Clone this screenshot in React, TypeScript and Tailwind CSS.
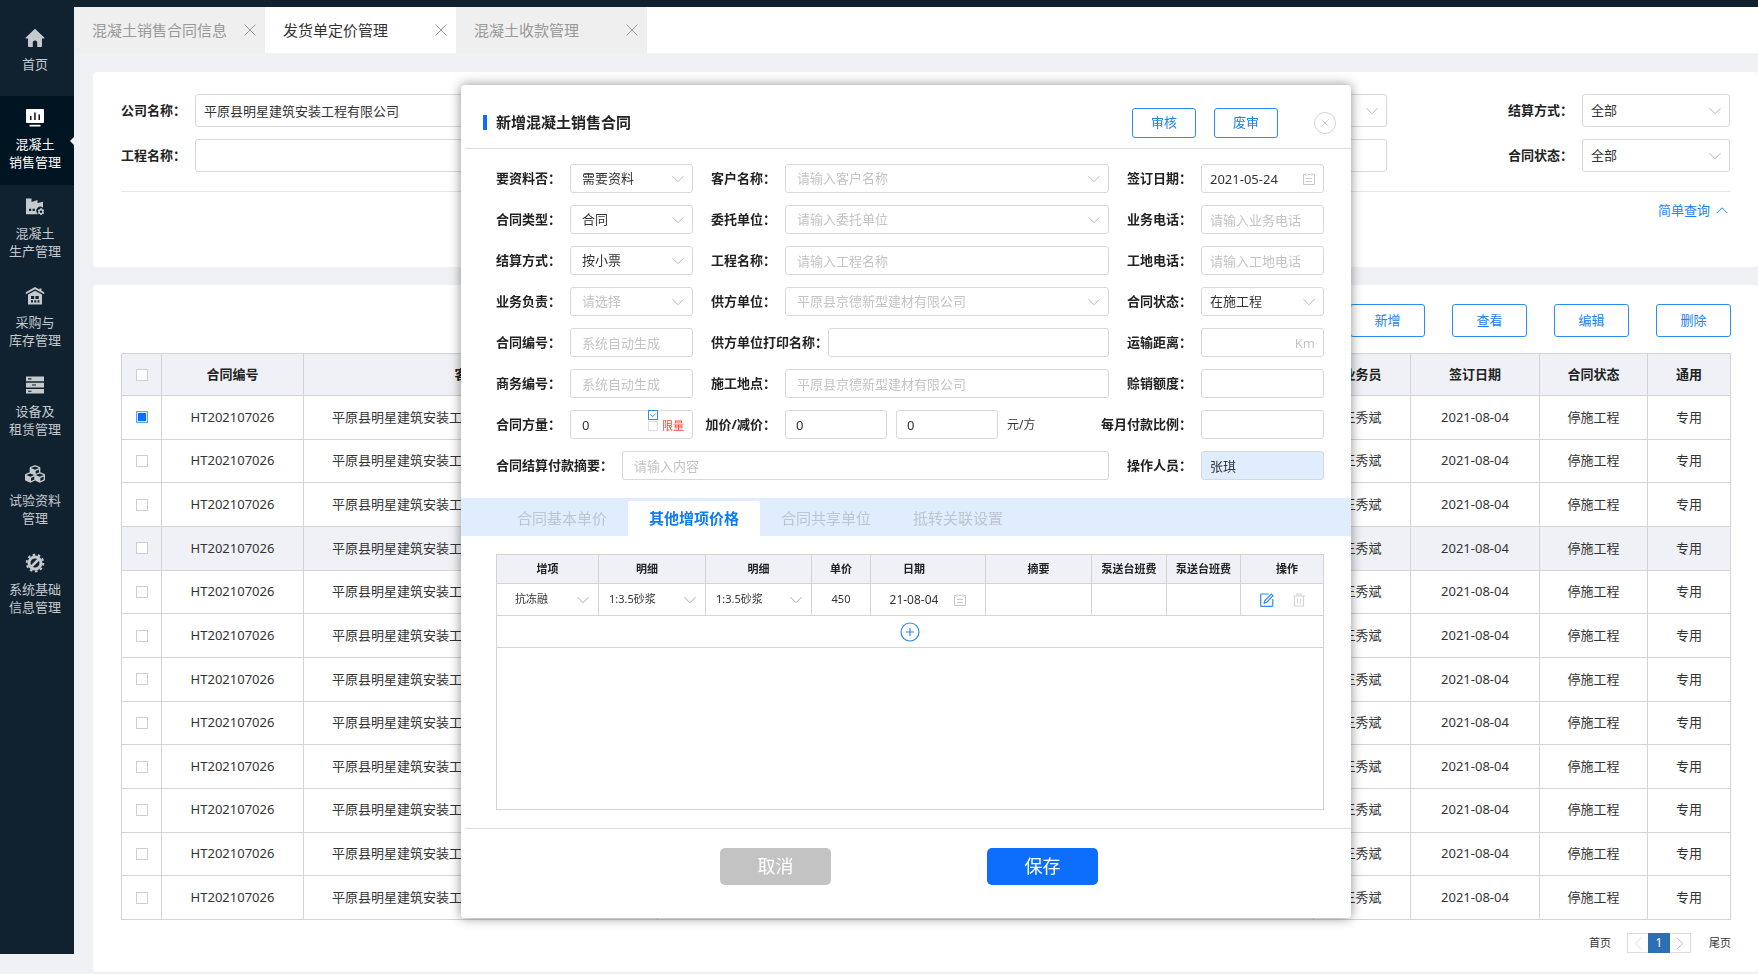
import { ReactNode } from 'react';
import clsx from 'clsx';
import { FaCubes } from 'react-icons/fa';

const HomeIcon = () => (
  <svg viewBox="0 0 20 20" className="h-[20px] w-[20px]" fill="currentColor">
    <path d="M10 0.8 0.8 9.6c-.5.5-.2 1 .4 1H3v7.6c0 .5.3.8.8.8h4v-4.4c0-1.3.9-2 2.2-2s2.2.7 2.2 2V19h4c.5 0 .8-.3.8-.8v-7.6h1.8c.6 0 .9-.5.4-1z" />
  </svg>
);

const SalesIcon = () => (
  <svg viewBox="0 0 20 20" className="h-[20px] w-[20px]" fill="currentColor">
    <path
      fillRule="evenodd"
      d="M2.2 1h15.6c.8 0 1.2.4 1.2 1.2v11.6c0 .8-.4 1.2-1.2 1.2H2.2C1.400 15 1 14.600 1 13.800V2.200C1 1.400 1.400 1 2.200 1zM5 8v4h1.500V8zM9.200 4.500V12h1.500V4.500zM13.500 6.500V12H15V6.500z"
    />
    <rect x="4.500" y="16.800" width="11" height="1.700" />
  </svg>
);

const FactoryIcon = () => (
  <svg viewBox="0 0 20 20" className="h-[20px] w-[20px]" fill="currentColor">
    <path
      fillRule="evenodd"
      d="M1 1.500h5.500V5l6-2v3l5.500-1.200v6a4 4 0 0 0-5.600 5.700l.5.700H1zM4 11.800v2.200h2.200v-2.200zM7.600 11.800v2.200h2.200v-2.200z"
    />
    <path
      fillRule="evenodd"
      d="m15.300 11.300 1.400 0 .5 1 1.200.1.700 1.200-.7 1.100.7 1.200-.8 1.100-1.200.1-.5 1h-1.300l-.6-1-1.100-.1-.7-1.100.6-1.200-.6-1.100.7-1.200 1.200-.1zM16 13.400a1.300 1.300 0 1 0 0 2.600 1.300 1.300 0 0 0 0-2.600z"
    />
  </svg>
);

const WarehouseIcon = () => (
  <svg viewBox="0 0 20 20" className="h-[20px] w-[20px]" fill="currentColor">
    <path d="M10 1 .8 6.200v2L10 3.200l9.200 5v-2L16.500 4.700V2.600h-2v1z" />
    <path
      fillRule="evenodd"
      d="M10 4.800 3 8.600V18.500h14V8.600zM6 10h3.200v3H6zM10.500 10h3.200v3h-3.200zM6 14.300h2v2.300H6zM9.300 14.300h2v2.300h-2zM12.600 14.300h1.800v2.300h-1.800z"
    />
  </svg>
);

const ServerIcon = () => (
  <svg viewBox="0 0 20 20" className="h-[20px] w-[20px]" fill="currentColor">
    <path
      fillRule="evenodd"
      d="M1 1.500h18v4.700H1zM3 3.300v1.100h3.500V3.300zM1 7.700h18v4.700H1zM7 9.500v1.100h4V9.500zM1 13.900h18v4.700H1zM3 15.700v1.100h3.500v-1.100z"
    />
  </svg>
);

const CubesIcon = () => <FaCubes className="h-[20px] w-[20px]" />;

const GearIcon = () => (
  <svg viewBox="0 0 20 20" className="h-[20px] w-[20px]" fill="none" stroke="currentColor">
    <circle cx="10" cy="10" r="8.300" strokeWidth="2" strokeDasharray="2.600 2.614" />
    <circle cx="10" cy="10" r="6" strokeWidth="3" />
    <path d="M6.500 13.500 13.500 6.500" strokeWidth="2.500" />
  </svg>
);

const Chevron = ({ className }: { className?: string }) => (
  <svg viewBox="0 0 12 7" className={clsx('pointer-events-none h-[7px] w-[12px]', className)} fill="none" stroke="currentColor">
    <path d="M0.500 0.700 6 6.200 11.500 0.700" />
  </svg>
);

const CalendarIcon = ({ className }: { className?: string }) => (
  <svg viewBox="0 0 12 12" className={clsx('pointer-events-none h-[12px] w-[12px]', className)} fill="none" stroke="currentColor">
    <path d="M2 1.500H0.500v10h11v-10H10M4.500 1.500h3M3 0v3M9 0v3M3 5.500h6M3 8.500h6" />
  </svg>
);

const CloseIcon = ({ className }: { className?: string }) => (
  <svg viewBox="0 0 12 12" className={className} fill="none" stroke="currentColor">
    <path d="M0.500 0.500 11.500 11.500M11.500 0.500 0.500 11.500" />
  </svg>
);

const MENU = [
  { icon: HomeIcon, lines: ['首页'] },
  { icon: SalesIcon, lines: ['混凝土', '销售管理'], active: true },
  { icon: FactoryIcon, lines: ['混凝土', '生产管理'] },
  { icon: WarehouseIcon, lines: ['采购与', '库存管理'] },
  { icon: ServerIcon, lines: ['设备及', '租赁管理'] },
  { icon: CubesIcon, lines: ['试验资料', '管理'] },
  { icon: GearIcon, lines: ['系统基础', '信息管理'] },
];

const PAGE_TABS = [
  { name: '混凝土销售合同信息' },
  { name: '发货单定价管理', active: true },
  { name: '混凝土收款管理' },
];

const CONTRACT_TABS = ['合同基本单价', '其他增项价格', '合同共享单位', '抵转关联设置'];

// some price headers sit off centre, above the value rather than the cell
const PRICE_HEADERS = [
  { name: '增项' },
  { name: '明细', className: 'pr-[10px]' },
  { name: '明细' },
  { name: '单价' },
  { name: '日期', className: 'pr-[28px]' },
  { name: '摘要' },
  { name: '泵送台班费' },
  { name: '泵送台班费' },
  { name: '操作', className: 'pl-[10px]' },
];

const ROWS = Array.from({ length: 12 }, (_, i) => ({
  id: i,
  code: 'HT202107026',
  customer: '平原县明星建筑安装工程有限公司',
  remark: '',
  salesman: '王秀斌',
  date: '2021-08-04',
  status: '停施工程',
  usage: '专用',
}));

const boxClass = 'w-full rounded-[3px] border border-[#d9d9d9] text-[13px] text-[#333] outline-none placeholder:text-[#c4c4c4]';

interface ControlProps {
  id: string;
  value?: string;
  placeholder?: string;
  className?: string;
}

function TextBox({ id, value, placeholder, className = 'h-[29px] px-[11px]' }: ControlProps) {
  return <input id={id} type="text" defaultValue={value} placeholder={placeholder} className={clsx(boxClass, className)} />;
}

function SelectBox({ id, value, placeholder, className = 'h-[29px] px-[11px]' }: ControlProps) {
  return (
    <div className="relative w-full">
      <select id={id} className={clsx(boxClass, 'block appearance-none', !value && 'text-[#c4c4c4]', className)}>
        <option>{value || placeholder}</option>
      </select>
      <Chevron className="absolute top-1/2 right-[9px] -translate-y-1/2 text-[#b5b5b5]" />
    </div>
  );
}

interface FieldProps {
  id: string;
  label: string;
  wide?: boolean;
  className?: string;
  children: ReactNode;
}

function Field({ id, label, wide, className, children }: FieldProps) {
  return (
    <div className={clsx('flex items-center', className)}>
      <label
        htmlFor={id}
        className={clsx('flex shrink-0 justify-end text-[13px] font-bold whitespace-nowrap text-[#222]', !wide && 'mr-[9px] w-[65px]')}
      >
        {label}：
      </label>
      {children}
    </div>
  );
}

function OutlineButton({ children, className }: { children: ReactNode; className: string }) {
  return (
    <button type="button" className={clsx('rounded-[3px] border border-[#2b8cf5] bg-white text-[13px] text-[#1b82f5]', className)}>
      {children}
    </button>
  );
}

function Sidebar() {
  return (
    <aside className="mb-5 w-[74px] shrink-0 bg-[#102130]">
      <nav>
        {MENU.map(({ icon: Icon, lines, active }) => (
          <a
            key={lines.join('')}
            href="#"
            className={clsx(
              'relative flex h-[89px] flex-col items-center gap-[7px] pr-[4px] text-[13px] leading-[18px]',
              lines.length === 1 ? 'pt-[21px]' : 'pt-[12px]',
              active ? 'bg-[#011422] text-white' : 'text-[#c5cacd]'
            )}
          >
            <Icon />
            <span className="text-center">
              {lines.map((line) => (
                <span key={line} className="block">{line}</span>
              ))}
            </span>
            {active && (
              <svg viewBox="0 0 4 8" className="absolute top-[41px] right-0 h-[8px] w-[4px]" fill="#eff1f5">
                <path d="M4 0 0 4l4 4z" />
              </svg>
            )}
          </a>
        ))}
      </nav>
    </aside>
  );
}

function PageTabs() {
  return (
    <div className="flex h-[46px] bg-white">
      {PAGE_TABS.map((tab) => (
        <div
          key={tab.name}
          className={clsx(
            'flex w-[191px] items-center justify-between pr-[9px] pl-[18px] text-[15px]',
            tab.active ? 'bg-white text-[#333]' : 'bg-[#efefef] text-[#999]'
          )}
        >
          <a href="#">{tab.name}</a>
          <button type="button" aria-label="关闭" className="text-[#999]">
            <CloseIcon className="h-[12px] w-[12px]" />
          </button>
        </div>
      ))}
    </div>
  );
}

function FilterCard() {
  const box = 'h-[33px] px-[8px]';
  return (
    <section className="h-[195px] rounded-[4px] bg-white px-[28px] pt-[22px]">
      <div className="grid grid-cols-[1fr_1fr_222px] gap-y-[12px] border-b border-[#e6e6e6] pb-[19px]">
        <Field id="company" label="公司名称" className="mr-[60px]">
          <TextBox id="company" value="平原县明星建筑安装工程有限公司" className={box} />
        </Field>
        <Field id="customer" label="客户名称" className="mr-[121px]">
          <SelectBox id="customer" className={box} />
        </Field>
        <Field id="settle" label="结算方式">
          <SelectBox id="settle" value="全部" className={box} />
        </Field>
        <Field id="project" label="工程名称" className="mr-[60px]">
          <TextBox id="project" className={box} />
        </Field>
        <Field id="contract" label="合同编号" className="mr-[121px]">
          <TextBox id="contract" className={box} />
        </Field>
        <Field id="state" label="合同状态">
          <SelectBox id="state" value="全部" className={box} />
        </Field>
      </div>
      <div className="flex justify-end pt-[9px]">
        <button type="button" className="flex items-center gap-[6px] pr-[2px] text-[13px] text-[#1b82f5]">
          简单查询
          <Chevron className="rotate-180" />
        </button>
      </div>
    </section>
  );
}

function ContractTable() {
  return (
    <table className="h-[567px] w-full table-fixed border-collapse text-[13px] text-[#333] [&_td]:border [&_td]:border-[#d4d4d4] [&_td]:p-0 [&_th]:border [&_th]:border-[#d4d4d4] [&_th]:p-0">
      <colgroup>
        <col className="w-[40px]" />
        <col className="w-[142px]" />
        <col className="w-[354px]" />
        <col />
        <col className="w-[97px]" />
        <col className="w-[129px]" />
        <col className="w-[108px]" />
        <col className="w-[83px]" />
      </colgroup>
      <thead>
        <tr className="h-[42px] bg-[#eff1f6] text-[#222]">
          <th>
            <input type="checkbox" aria-label="全选" className="mx-auto block h-[12px] w-[12px] appearance-none border border-[#cfcfcf] bg-white" />
          </th>
          <th>合同编号</th>
          <th>客户名称</th>
          <th>备注</th>
          <th>业务员</th>
          <th>签订日期</th>
          <th>合同状态</th>
          <th>通用</th>
        </tr>
      </thead>
      <tbody className="text-center">
        {ROWS.map((row) => (
          <tr key={row.id} className={row.id === 3 ? 'bg-[#eff1f6]' : 'bg-white'}>
            <td>
              <input
                type="checkbox"
                aria-label={`选择 ${row.code}`}
                defaultChecked={row.id === 0}
                className="mx-auto block h-[12px] w-[12px] appearance-none border border-[#cfcfcf] bg-white checked:border-[#5aa5ff] checked:bg-[#0d6efd] checked:shadow-[inset_0_0_0_1px_#d5e8ff]"
              />
            </td>
            <td>{row.code}</td>
            <td>
              <div className="pl-[28px] text-left">{row.customer}</div>
            </td>
            <td>{row.remark}</td>
            <td>{row.salesman}</td>
            <td>{row.date}</td>
            <td>{row.status}</td>
            <td>{row.usage}</td>
          </tr>
        ))}
      </tbody>
    </table>
  );
}

function ListCard() {
  return (
    <section className="flex-1 rounded-[4px] bg-white pt-[19px] pr-[27px] pl-[28px]">
      <div className="mb-[16px] flex justify-end gap-[27px]">
        {['新增', '查看', '编辑', '删除'].map((name) => (
          <OutlineButton key={name} className="h-[33px] w-[75px]">{name}</OutlineButton>
        ))}
      </div>
      <ContractTable />
      <div className="mt-[13px] flex items-center justify-end text-[11px] text-[#333]">
        <a href="#">首页</a>
        <div className="mr-[18px] ml-[16px] flex h-[20px] border border-[#dcdcdc]">
          <button type="button" aria-label="上一页" className="flex w-[20px] items-center justify-center text-[#ddd]">
            <Chevron className="rotate-90" />
          </button>
          <button type="button" className="-my-px w-[22px] bg-[#2c6fb3] text-[12px] text-white">1</button>
          <button type="button" aria-label="下一页" className="flex w-[20px] items-center justify-center text-[#bbb]">
            <Chevron className="-rotate-90" />
          </button>
        </div>
        <a href="#">尾页</a>
      </div>
    </section>
  );
}

function ContractForm() {
  const narrow = 'h-[29px] px-[8px]';
  return (
    <form className="grid grid-cols-[197px_1fr_197px] gap-x-[18px] gap-y-[12px] pt-[15px] pr-[27px] pl-[35px]">
      <Field id="f-material" label="要资料否">
        <SelectBox id="f-material" value="需要资料" />
      </Field>
      <Field id="f-customer" label="客户名称">
        <SelectBox id="f-customer" placeholder="请输入客户名称" />
      </Field>
      <Field id="f-date" label="签订日期">
        <div className="relative w-full">
          <TextBox id="f-date" value="2021-05-24" className="block h-[29px] px-[8px]" />
          <CalendarIcon className="absolute top-1/2 right-[9px] -translate-y-1/2 text-[#c8c8c8]" />
        </div>
      </Field>

      <Field id="f-type" label="合同类型">
        <SelectBox id="f-type" value="合同" />
      </Field>
      <Field id="f-client" label="委托单位">
        <SelectBox id="f-client" placeholder="请输入委托单位" />
      </Field>
      <Field id="f-tel" label="业务电话">
        <TextBox id="f-tel" placeholder="请输入业务电话" className={narrow} />
      </Field>

      <Field id="f-settle" label="结算方式">
        <SelectBox id="f-settle" value="按小票" />
      </Field>
      <Field id="f-project" label="工程名称">
        <TextBox id="f-project" placeholder="请输入工程名称" />
      </Field>
      <Field id="f-site-tel" label="工地电话">
        <TextBox id="f-site-tel" placeholder="请输入工地电话" className={narrow} />
      </Field>

      <Field id="f-owner" label="业务负责">
        <SelectBox id="f-owner" placeholder="请选择" />
      </Field>
      <Field id="f-supplier" label="供方单位">
        <SelectBox id="f-supplier" placeholder="平原县京德新型建材有限公司" />
      </Field>
      <Field id="f-state" label="合同状态">
        <SelectBox id="f-state" value="在施工程" className={narrow} />
      </Field>

      <Field id="f-code" label="合同编号">
        <TextBox id="f-code" placeholder="系统自动生成" />
      </Field>
      <Field id="f-print" label="供方单位打印名称" wide>
        <TextBox id="f-print" />
      </Field>
      <Field id="f-distance" label="运输距离">
        <TextBox id="f-distance" placeholder="Km" className="h-[29px] px-[8px] text-right" />
      </Field>

      <Field id="f-biz-code" label="商务编号">
        <TextBox id="f-biz-code" placeholder="系统自动生成" />
      </Field>
      <Field id="f-place" label="施工地点">
        <TextBox id="f-place" placeholder="平原县京德新型建材有限公司" />
      </Field>
      <Field id="f-credit" label="赊销额度">
        <TextBox id="f-credit" className={narrow} />
      </Field>

      <Field id="f-volume" label="合同方量">
        <div className="relative w-full">
          <TextBox id="f-volume" value="0" className="block h-[29px] px-[11px]" />
          <div className="absolute top-0 right-[9px] flex flex-col">
            <span className="relative h-[10px] w-[10px]">
              <input
                type="checkbox"
                aria-label="启用限量"
                defaultChecked
                className="block h-[10px] w-[10px] appearance-none border border-[#2b8cf5] bg-white"
              />
              <svg viewBox="0 0 10 10" className="pointer-events-none absolute inset-0" fill="none" stroke="#2b8cf5">
                <path d="M2.500 4.500 4.500 6.700 7.700 3.500" />
              </svg>
            </span>
            <label className="flex items-center gap-[4px] text-[11px] leading-[12px] text-[#f5483f]">
              <input type="checkbox" className="h-[10px] w-[10px] appearance-none border border-[#dcdcdc] bg-white" />
              限量
            </label>
          </div>
        </div>
      </Field>
      <Field id="f-markup" label="加价/减价">
        <div className="flex items-center gap-[9px]">
          <TextBox id="f-markup" value="0" className="h-[29px] max-w-[102px] px-[10px]" />
          <input aria-label="减价" type="text" defaultValue="0" className={clsx(boxClass, 'h-[29px] max-w-[102px] px-[10px]')} />
          <span className="shrink-0 text-[12px] text-[#333]">元/方</span>
        </div>
      </Field>
      <Field id="f-ratio" label="每月付款比例">
        <TextBox id="f-ratio" className={narrow} />
      </Field>

      <Field id="f-summary" label="合同结算付款摘要" wide className="col-span-2 gap-[9px]">
        <TextBox id="f-summary" placeholder="请输入内容" />
      </Field>
      <Field id="f-operator" label="操作人员">
        <TextBox id="f-operator" value="张琪" className="h-[29px] bg-[#e0edfe] px-[8px]" />
      </Field>
    </form>
  );
}

function CellSelect({ label, value }: { label: string; value: string }) {
  return (
    <div className="relative">
      <select aria-label={label} className="block h-[31px] w-full appearance-none px-[10px] text-[11px] text-[#333] outline-none">
        <option>{value}</option>
      </select>
      <Chevron className="absolute top-1/2 right-[9px] -translate-y-1/2 text-[#a8a8a8]" />
    </div>
  );
}

function PriceTable() {
  return (
    <div className="mt-[18px] mr-[27px] ml-[35px] h-[256px] border border-[#d4d4d4]">
      <table className="-mt-px -ml-px w-[calc(100%+2px)] table-fixed border-collapse text-[11px] text-[#333] [&_td]:border [&_td]:border-[#d4d4d4] [&_th]:border [&_th]:border-[#d4d4d4]">
        <colgroup>
          <col className="w-[102px]" />
          <col className="w-[107px]" />
          <col />
          <col className="w-[59px]" />
          <col className="w-[115px]" />
          <col className="w-[106px]" />
          <col className="w-[75px]" />
          <col className="w-[74px]" />
          <col className="w-[83px]" />
        </colgroup>
        <thead>
          <tr className="h-[29px] bg-[#eff1f6] text-[#222]">
            {PRICE_HEADERS.map(({ name, className }, i) => (
              <th key={i} scope="col" className={className}>{name}</th>
            ))}
          </tr>
        </thead>
        <tbody className="text-center">
          <tr className="h-[32px]">
            <td>
              <div className="pl-[8px]">
                <CellSelect label="增项" value="抗冻融" />
              </div>
            </td>
            <td>
              <CellSelect label="明细" value="1:3.5砂浆" />
            </td>
            <td>
              <CellSelect label="明细" value="1:3.5砂浆" />
            </td>
            <td>450</td>
            <td>
              <div className="flex items-center justify-center gap-[16px] text-[12px]">
                21-08-04
                <CalendarIcon className="text-[#c8c8c8]" />
              </div>
            </td>
            <td />
            <td />
            <td />
            <td>
              <div className="flex items-center justify-center gap-[19px]">
                <button type="button" aria-label="编辑" className="text-[#2b8cf5]">
                  <svg viewBox="0 0 14 14" className="h-[14px] w-[14px]" fill="none" stroke="currentColor" strokeWidth="1.200">
                    <path d="M8.500 1H1.500a.8.800 0 0 0-.8.800v10.700a.8.800 0 0 0 .8.800h10.500a.8.800 0 0 0 .8-.8V6" />
                    <path d="M4.300 10 5 7.300 11.300 1l1.700 1.700L6.800 9.200z" />
                  </svg>
                </button>
                <button type="button" aria-label="删除" className="text-[#d5d5d5]">
                  <svg viewBox="0 0 12 14" className="h-[14px] w-[12px]" fill="none" stroke="currentColor" strokeWidth="1.200">
                    <path d="M0 3h12M4 3V1h4v2M1.500 3v10h9V3M4.500 5.500v5M7.500 5.500v5" />
                  </svg>
                </button>
              </div>
            </td>
          </tr>
          <tr className="h-[32px]">
            <td colSpan={9}>
              <button type="button" aria-label="添加一行" className="mx-auto block text-[#2b8cf5]">
                <svg viewBox="0 0 20 20" className="h-[20px] w-[20px]" fill="none" stroke="currentColor" strokeWidth="1.200">
                  <circle cx="10" cy="10" r="9" />
                  <path d="M6 10h8M10 6v8" />
                </svg>
              </button>
            </td>
          </tr>
        </tbody>
      </table>
    </div>
  );
}

function ContractDialog() {
  return (
    <div className="fixed inset-0 flex items-start justify-center overflow-auto pt-[85px] pl-[54px]">
      <div role="dialog" aria-label="新增混凝土销售合同" className="w-[890px] rounded-[4px] bg-white pb-[33px] shadow-[0_0_12px_rgba(0,0,0,0.45)]">
        <header className="ml-[4px] flex h-[64px] items-center border-b border-[#dcdcdc] pt-[12px] pr-[15px] pl-[18px]">
          <span className="mr-[9px] h-[15px] w-[4px] bg-[#0d6efd]" />
          <h2 className="flex-1 text-[15px] font-bold text-[#222]">新增混凝土销售合同</h2>
          <OutlineButton className="mr-[18px] h-[30px] w-[64px]">审核</OutlineButton>
          <OutlineButton className="h-[30px] w-[64px]">废审</OutlineButton>
          <button
            type="button"
            aria-label="关闭"
            className="ml-[36px] flex h-[22px] w-[22px] items-center justify-center rounded-full border border-[#d5d5d5] text-[#bbb]"
          >
            <CloseIcon className="h-[8px] w-[8px]" />
          </button>
        </header>

        <ContractForm />

        <div className="mt-[18px] flex h-[38px] items-end bg-[#e0edfe] pl-[35px]">
          {CONTRACT_TABS.map((tab, i) => (
            <button
              key={tab}
              type="button"
              className={clsx(
                'h-[35px] w-[132px] rounded-t-[2px] text-[15px]',
                i === 1 ? 'bg-white font-bold text-[#0d7bf5]' : 'text-[#bdc5cf]'
              )}
            >
              {tab}
            </button>
          ))}
        </div>

        <PriceTable />

        <footer className="mt-[18px] ml-[4px] flex justify-center gap-[156px] border-t border-[#dcdcdc] pt-[19px] pl-[2px] text-[18px] text-white">
          <button type="button" className="h-[37px] w-[111px] rounded-[5px] bg-[#c3c3c3]">取消</button>
          <button type="button" className="h-[37px] w-[111px] rounded-[5px] bg-[#0d6efd]">保存</button>
        </footer>
      </div>
    </div>
  );
}

export default function App() {
  return (
    <div className="flex min-h-screen flex-col bg-[#eff1f5] font-['Noto_Sans','Noto_Sans_CJK_SC',sans-serif]">
      <div className="h-[7px] bg-[#102130]" />
      <div className="flex flex-1">
        <Sidebar />
        <main className="flex min-w-0 flex-1 flex-col">
          <PageTabs />
          <div className="flex flex-1 flex-col gap-[18px] pt-[19px] pb-[2px] pl-[19px]">
            <FilterCard />
            <ListCard />
          </div>
        </main>
      </div>
      <ContractDialog />
    </div>
  );
}
